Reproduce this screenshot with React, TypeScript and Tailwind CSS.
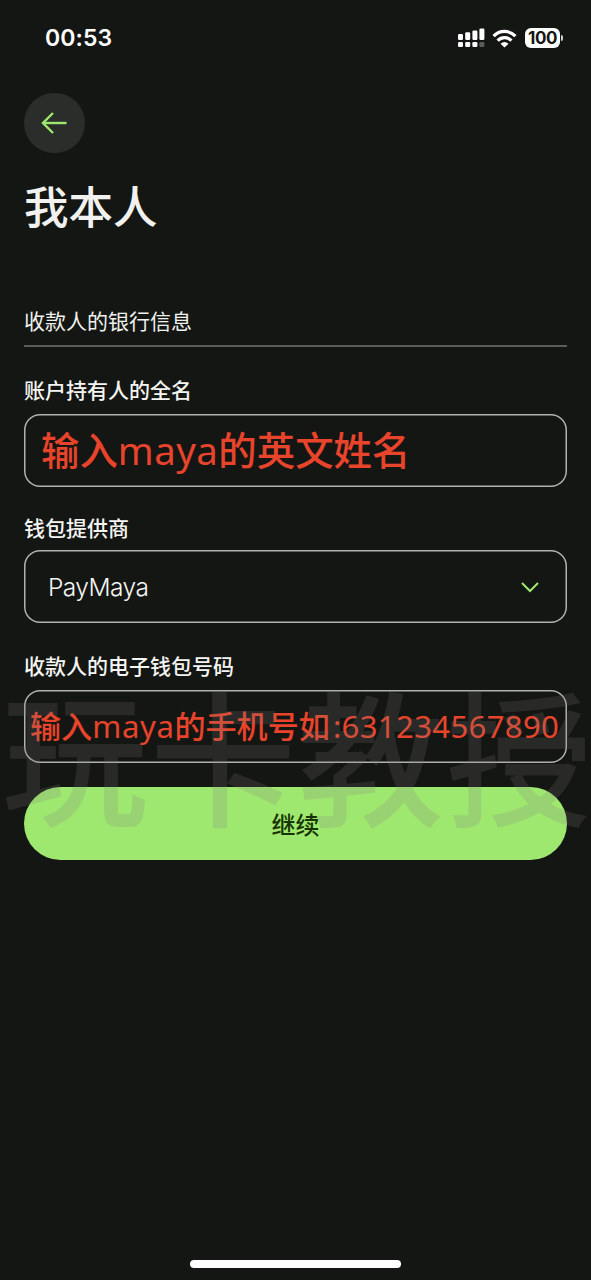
import type { ReactNode } from "react"

function StatusBar() {
  return (
    <div className="flex h-[76px] items-center justify-between pl-[45px] pr-[28px] text-white">
      <span className="font-['Inter'] text-[23px] font-semibold leading-none tracking-[0.1px]">00:53</span>
      <div className="flex items-center">
        {/* Dual SIM signal */}
        <svg width="27" height="20" viewBox="0 0 27 20" fill="currentColor">
          <rect x="0" y="6" width="5" height="6" rx="1.2" />
          <rect x="7.2" y="4.3" width="5" height="7.7" rx="1.2" />
          <rect x="14.4" y="2.6" width="5" height="9.4" rx="1.2" />
          <rect x="21.4" y="0.5" width="5" height="11.5" rx="1.2" />
          <rect x="0" y="14" width="5" height="5" rx="1.2" />
          <rect x="7.2" y="14" width="5" height="5" rx="1.2" />
          <rect x="14.4" y="14" width="5" height="5" rx="1.2" />
          <rect x="21.4" y="14" width="5" height="5" rx="1.2" opacity="0.3" />
        </svg>
        {/* Wifi */}
        <svg className="ml-[7px]" width="25" height="19" viewBox="0 0 25 19" fill="none" stroke="currentColor" strokeWidth="3.2">
          <path d="M1.6 7.2C7.6 0.8 17.4 0.8 23.4 7.2" />
          <path d="M5.6 11.6C9.6 7.6 15.4 7.6 19.4 11.6" />
          <path d="M12.5 18.6L8.5 14.8Q12.5 11.4 16.5 14.8Z" fill="currentColor" stroke="none" />
        </svg>
        {/* Battery */}
        <div className="ml-[8px] flex h-[20px] w-[35px] items-center justify-center rounded-[6px] bg-white font-['Inter'] text-[17px] font-bold leading-none tracking-[-0.5px] text-[#141613]">
          100
        </div>
        <div className="ml-[1px] h-[6px] w-[2px] rounded-r-full bg-white/80" />
      </div>
    </div>
  )
}

function Field({ label, children }: { label: string; children: ReactNode }) {
  return (
    <div>
      <div className="h-[35px] text-[21px] font-medium leading-[21px] text-[#f4f5f2]">{label}</div>
      {children}
    </div>
  )
}

export default function App() {
  return (
    <main className="relative flex h-[1280px] w-[591px] flex-col overflow-hidden bg-[#141613] font-['Noto_Sans_CJK_SC',sans-serif]">
      <StatusBar />

      <div className="flex flex-col px-6 pt-[17px]">
        <button className="flex h-[60px] w-[61px] items-center justify-center rounded-full bg-[#2b2d2b]">
          <svg className="-ml-[1px]" width="26" height="22" viewBox="0 0 26 22" fill="none" stroke="#9fe870" strokeWidth="2.4">
            <path d="M25.5 11H2" />
            <path d="M12 1L2 11L12 21" />
          </svg>
        </button>

        <h1 className="mt-[30px] text-[44.5px] font-medium leading-[44px] text-[#f1f2ef]">我本人</h1>

        <h2 className="mt-[82px] h-[38px] border-b-2 border-[#5b5d5a] text-[21px] leading-[22px] text-[#f0f1ee]">
          收款人的银行信息
        </h2>

        <div className="mt-[32px]">
          <Field label="账户持有人的全名">
            <div className="flex h-[73px] items-center whitespace-nowrap rounded-[16px] pb-[2px] pl-[17px] text-[38.4px] font-medium leading-none text-[#e8442b] shadow-[inset_0_0_0_1.5px_#b0b2ad]">
              <p>
                输入<span className="font-['Noto_Sans'] font-[450] tracking-[0.5px]">maya</span>的英文姓名
              </p>
            </div>
          </Field>
        </div>

        <div className="mt-[30px]">
          <Field label="钱包提供商">
            <div className="-mt-[2px] flex h-[73px] items-center justify-between rounded-[16px] pb-px pl-[24px] pr-[28px] pt-[3px] shadow-[inset_0_0_0_1.5px_#b0b2ad]">
              <span className="font-['Inter'] text-[24.5px] font-[350] leading-none tracking-[-0.55px] text-[#f4f5f2]">PayMaya</span>
              <svg width="18" height="11" viewBox="0 0 18 11" fill="none" stroke="#9fe870" strokeWidth="2">
                <path d="M1 1L9 9L17 1" />
              </svg>
            </div>
          </Field>
        </div>

        <div className="mt-[32px]">
          <Field label="收款人的电子钱包号码">
            <div className="flex h-[73px] items-center whitespace-nowrap rounded-[16px] pb-[2px] pl-[6px] text-[31.1px] font-medium leading-none text-[#e8442b] shadow-[inset_0_0_0_1.5px_#b0b2ad]">
              <p>
                输入<span className="font-['Noto_Sans'] font-[450] tracking-[0.6px]">maya</span>的手机号如
                <span className="ml-[3px] font-['Noto_Sans'] font-[450] tracking-[0.35px]">:631234567890</span>
              </p>
            </div>
          </Field>
        </div>

        <button className="mt-[24px] h-[73px] rounded-full bg-[#9fe870] pt-[1px] text-[24px] font-medium leading-none text-[#163300]">
          继续
        </button>
      </div>

      {/* Watermark over the form */}
      <div className="pointer-events-none absolute left-[2px] top-[678px] select-none whitespace-nowrap text-[146px] font-medium leading-[148px] tracking-[2px] text-[#7b7d7b]/20">
        玩卡教授
      </div>

      {/* Home indicator */}
      <div className="mx-auto mb-[12px] mt-auto h-[8px] w-[211px] rounded-full bg-white" />
    </main>
  )
}
